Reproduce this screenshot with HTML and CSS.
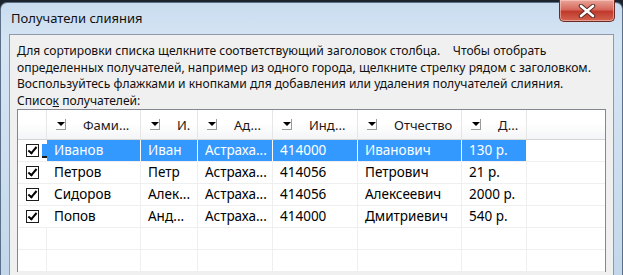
FILE: index.html
```html
<!DOCTYPE html>
<html lang="ru">
<head>
    <meta charset="UTF-8">
    <title>Получатели слияния</title>
    <link rel="stylesheet" href="styles.css">
</head>
<body>
    <div class="window">
        <div class="titlebar">
            <span class="title">Получатели слияния</span>
            <div class="close-btn">
                <svg width="18" height="14" viewBox="0 0 18 14">
                    <path d="M3 2 L15 12 M15 2 L3 12" stroke="#5a2a24" stroke-width="4.5" stroke-linecap="round"/>
                    <path d="M3 2 L15 12 M15 2 L3 12" stroke="#ffffff" stroke-width="2.6" stroke-linecap="round"/>
                </svg>
            </div>
        </div>

        <div class="client">
            <p class="hint">
                Для сортировки списка щелкните соответствующий заголовок столбца.&nbsp;&nbsp;&nbsp; Чтобы отобрать<br>
                определенных получателей, например из одного города, щелкните стрелку рядом с заголовком.<br>
                Воспользуйтесь флажками и кнопками для добавления или удаления получателей слияния.
            </p>
            <div class="list-label">Списо<u>к</u> получателей:</div>

            <div class="listbox">
                <div class="grid header">
                    <div class="hcell"></div>
                    <div class="hcell"><span class="drop"></span>Фами...</div>
                    <div class="hcell"><span class="drop"></span>И.</div>
                    <div class="hcell"><span class="drop"></span>Ад...</div>
                    <div class="hcell"><span class="drop"></span>Инд...</div>
                    <div class="hcell"><span class="drop"></span>Отчество</div>
                    <div class="hcell"><span class="drop"></span>Д...</div>
                    <div class="hcell last"></div>
                </div>

                <div class="grid row selected">
                    <div class="cell check"><span class="box"></span><span class="focus"></span></div>
                    <div class="cell">Иванов</div>
                    <div class="cell">Иван</div>
                    <div class="cell">Астраха...</div>
                    <div class="cell">414000</div>
                    <div class="cell">Иванович</div>
                    <div class="cell">130 р.</div>
                    <div class="cell empty"></div>
                </div>
                <div class="grid row">
                    <div class="cell check"><span class="box"></span></div>
                    <div class="cell">Петров</div>
                    <div class="cell">Петр</div>
                    <div class="cell">Астраха...</div>
                    <div class="cell">414056</div>
                    <div class="cell">Петрович</div>
                    <div class="cell">21 р.</div>
                    <div class="cell empty"></div>
                </div>
                <div class="grid row">
                    <div class="cell check"><span class="box"></span></div>
                    <div class="cell">Сидоров</div>
                    <div class="cell">Алек...</div>
                    <div class="cell">Астраха...</div>
                    <div class="cell">414056</div>
                    <div class="cell">Алексеевич</div>
                    <div class="cell">2000 р.</div>
                    <div class="cell empty"></div>
                </div>
                <div class="grid row">
                    <div class="cell check"><span class="box"></span></div>
                    <div class="cell">Попов</div>
                    <div class="cell">Анд...</div>
                    <div class="cell">Астраха...</div>
                    <div class="cell">414000</div>
                    <div class="cell">Дмитриевич</div>
                    <div class="cell">540 р.</div>
                    <div class="cell empty"></div>
                </div>
                <div class="grid row">
                    <div class="cell"></div><div class="cell"></div><div class="cell"></div><div class="cell"></div>
                    <div class="cell"></div><div class="cell"></div><div class="cell"></div><div class="cell empty"></div>
                </div>
                <div class="grid row">
                    <div class="cell"></div><div class="cell"></div><div class="cell"></div><div class="cell"></div>
                    <div class="cell"></div><div class="cell"></div><div class="cell"></div><div class="cell empty"></div>
                </div>
            </div>
        </div>
    </div>
</body>
</html>
```

FILE: styles.css
```css
html, body {
    margin: 0;
    padding: 0;
    height: 100%;
    overflow: hidden;
}

body {
    background-color: #1b232c;
    font-family: "Noto Sans", "Open Sans", sans-serif;
    color: #000;
}

.window {
    height: 100%;
    margin-top: 2px;
    border-radius: 7px 7px 0 0;
    background: linear-gradient(to bottom, #c9dcef 0%, #d6e5f4 40px, #c3d7ec 100%);
    box-sizing: border-box;
    padding: 0 8px 0 8px;
    border: 1px solid #5b6f86;
    border-bottom: none;
}

.titlebar {
    height: 31px;
    display: flex;
    align-items: flex-start;
    justify-content: space-between;
}

.title {
    font-size: 13px;
    margin-top: 6px;
    margin-left: 2px;
    color: #111;
}

.close-btn {
    width: 54px;
    height: 21px;
    margin-top: -3px;
    margin-right: -1px;
    border: 1px solid #6b2b25;
    border-top: none;
    border-radius: 0 0 5px 5px;
    background: linear-gradient(to bottom, #e9a49a 0%, #d7695c 45%, #c0392c 55%, #d4634f 100%);
    display: flex;
    align-items: center;
    justify-content: center;
    box-shadow: inset 0 0 0 1px rgba(255, 220, 210, 0.5);
}

.client {
    background-color: #f0f0f0;
    border: 1px solid #8d9aab;
    border-bottom: none;
    height: 100%;
    padding: 8px 7px 0 7px;
    box-sizing: border-box;
}

.hint {
    margin: 0;
    font-size: 12.1px;
    line-height: 16.5px;
    color: #111;
}

.list-label {
    font-size: 12.1px;
    line-height: 15px;
    color: #111;
}

.list-label u {
    text-decoration-thickness: 1px;
}

.listbox {
    margin-top: 1.5px;
    background: #fff;
    border: 1px solid #828790;
    border-bottom: none;
}

.grid {
    display: grid;
    grid-template-columns: 29px 94px 57px 75px 85px 104px 65px 1fr;
}

.header {
    height: 29px;
    background: linear-gradient(to bottom, #ffffff 0%, #ffffff 45%, #f4f5f7 100%);
    border-bottom: 1px solid #d5d5d5;
}

.hcell {
    display: flex;
    align-items: center;
    font-size: 13px;
    color: #1a1a1a;
    padding-left: 9px;
    border-right: 1px solid #e6e6e6;
    white-space: nowrap;
    overflow: hidden;
}

.hcell.last {
    border-right: none;
}

.drop {
    width: 10px;
    height: 11px;
    margin-right: 17px;
    flex-shrink: 0;
    box-sizing: border-box;
    border-right: 1px solid #9a9a9a;
    border-bottom: 1px solid #9a9a9a;
    position: relative;
}

.drop::after {
    content: "";
    position: absolute;
    left: 1px;
    top: 3px;
    border-left: 4px solid transparent;
    border-right: 4px solid transparent;
    border-top: 4px solid #000;
}

.row {
    height: 22px;
}

.cell {
    font-size: 13.5px;
    line-height: 21px;
    padding-left: 7px;
    border-right: 1px solid #efefef;
    border-bottom: 1px solid #efefef;
    white-space: nowrap;
    overflow: hidden;
}

.cell.empty {
    border-right: none;
}

.cell.check {
    padding-left: 8px;
    display: flex;
    align-items: center;
    gap: 3px;
    border-right: none;
}

.box {
    width: 13px;
    height: 13px;
    box-sizing: border-box;
    border: 1px solid #1c1c1c;
    background: #fff;
    position: relative;
}

.box::after {
    content: "";
    position: absolute;
    left: 3px;
    top: 0px;
    width: 3px;
    height: 7px;
    border-right: 2px solid #000;
    border-bottom: 2px solid #000;
    transform: rotate(40deg);
}

.focus {
    width: 5px;
    height: 12px;
    background: #3399ff;
    border-bottom: 2px solid #1a1a1a;
}

.selected .cell {
    background-color: #3399ff;
    color: #fff;
    border-right-color: #ffffff;
}

.selected .cell.check,
.selected .cell.empty {
    background: #fff;
}
```
